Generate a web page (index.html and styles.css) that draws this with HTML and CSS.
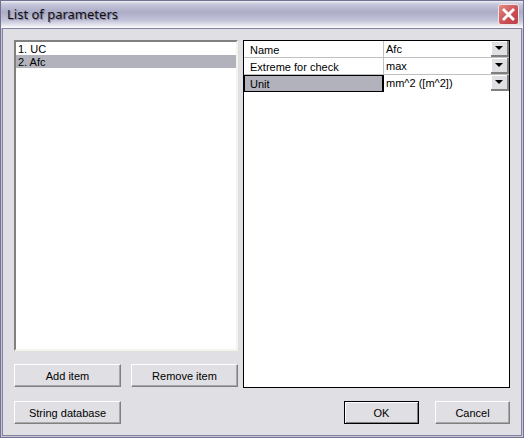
FILE: index.html
```html
<!DOCTYPE html>
<html lang="en">
<head>
    <meta charset="UTF-8">
    <title>List of parameters</title>
    <link rel="stylesheet" href="styles.css">
</head>
<body>
    <div class="window">
        <div class="titlebar">
            <div class="title">List of parameters</div>
            <div class="close">
                <svg width="15" height="15" viewBox="0 0 15 15">
                    <path d="M2 2 L13 13 M13 2 L2 13" stroke="#fff" stroke-width="2.8" fill="none"/>
                </svg>
            </div>
        </div>
        <div class="content">
            <div class="main">
                <div class="left-col">
                    <div class="list">
                        <div class="list-item">1. UC</div>
                        <div class="list-item selected">2. Afc</div>
                    </div>
                    <div class="list-buttons">
                        <button class="btn btn-wide">Add item</button>
                        <button class="btn btn-wide">Remove item</button>
                    </div>
                </div>
                <div class="grid">
                    <div class="row">
                        <div class="cell-label">Name</div>
                        <div class="cell-value">Afc<span class="drop"><span class="arrow"></span></span></div>
                    </div>
                    <div class="row">
                        <div class="cell-label">Extreme for check</div>
                        <div class="cell-value">max<span class="drop"><span class="arrow"></span></span></div>
                    </div>
                    <div class="row">
                        <div class="cell-label active">Unit</div>
                        <div class="cell-value">mm^2 ([m^2])<span class="drop"><span class="arrow"></span></span></div>
                    </div>
                </div>
            </div>
            <div class="footer">
                <button class="btn btn-wide">String database</button>
                <div class="footer-right">
                    <button class="btn btn-small btn-default">OK</button>
                    <button class="btn btn-small">Cancel</button>
                </div>
            </div>
        </div>
    </div>
</body>
</html>
```

FILE: styles.css
```css
* {
    margin: 0;
    padding: 0;
    box-sizing: border-box;
}

html, body {
    width: 524px;
    height: 438px;
    overflow: hidden;
}

body {
    font-family: "Liberation Sans", sans-serif;
    font-size: 11px;
    color: #000;
    background: #e0dfe3;
}

.window {
    height: 438px;
    display: flex;
    flex-direction: column;
    background: #c8c8d8;
    border: 1px solid #72718f;
    padding: 0 1px 1px 1px;
}

.titlebar {
    height: 27px;
    margin: 0 -1px;
    padding: 0 4px 1px 6px;
    display: flex;
    align-items: center;
    justify-content: space-between;
    background: linear-gradient(#f0f0f6 0, #c8c8dc 3px, #abacc6 11px, #c6c6da 20px, #f4f4f8 26px, #fff 27px);
}

.title {
    font-family: "Noto Sans", sans-serif;
    font-size: 13px;
    color: #111;
    text-shadow: 1px 1px 1px #77779a;
}

.close {
    width: 21px;
    height: 21px;
    display: flex;
    align-items: center;
    justify-content: center;
    background: linear-gradient(135deg, #e08a80, #c94f52 60%, #b8404a);
    border: 1px solid #f2e4e4;
    border-radius: 3px;
}

.content {
    flex: 1;
    display: flex;
    flex-direction: column;
    background: #e0dfe3;
    border: 1px solid #82819f;
    padding: 11px 11px 10px 11px;
}

.main {
    display: flex;
    gap: 5px;
    height: 348px;
}

.left-col {
    width: 224px;
    display: flex;
    flex-direction: column;
}

.list {
    height: 311px;
    background: #fff;
    border: 2px solid;
    border-color: #808080 #f5f4ea #f5f4ea #808080;
}

.list-item {
    height: 13px;
    line-height: 15px;
    padding-left: 2px;
}

.list-item.selected {
    background: #b1b2bb;
}

.list-buttons {
    display: flex;
    justify-content: space-between;
    margin-top: 13px;
}

.btn {
    height: 23px;
    font-family: inherit;
    font-size: 11px;
    color: #000;
    background: #e0dfe3;
    border: 1px solid;
    border-color: #fff #808080 #808080 #fff;
    box-shadow: inset -1px -1px 0 #a8a8a8;
}

.btn-wide {
    width: 107px;
}

.btn-small {
    width: 75px;
}

.btn-default {
    border-color: #000;
    box-shadow: inset 1px 1px 0 #fff, inset -1px -1px 0 #808080;
}

.grid {
    width: 267px;
    background: #fff;
    border: 1px solid #000;
}

.row {
    display: flex;
    height: 17px;
    border-bottom: 1px solid #c0c0c0;
}

.row:last-child {
    border-bottom: 0;
}

.cell-label {
    width: 140px;
    padding-left: 6px;
    line-height: 19px;
    border-right: 1px solid #c0c0c0;
}

.cell-label.active {
    background: #b1b2bb;
    border: 1px solid #000;
    border-width: 1px 2px 1px 1px;
    line-height: 17px;
    padding-left: 5px;
}

.cell-value {
    flex: 1;
    position: relative;
    padding-left: 2px;
    line-height: 16px;
}

.drop {
    position: absolute;
    top: 0;
    right: 0;
    width: 18px;
    height: 16px;
    display: flex;
    align-items: center;
    justify-content: center;
    background: #e0dfe3;
    border-right: 2px solid #808080;
    border-bottom: 2px solid #808080;
    box-shadow: inset 1px 1px 0 #fff;
}

.arrow {
    width: 0;
    height: 0;
    border-style: solid;
    border-width: 4px 4px 0 4px;
    border-color: #000 transparent transparent transparent;
}

.footer {
    display: flex;
    justify-content: space-between;
    margin-top: 13px;
}

.footer-right {
    display: flex;
    gap: 16px;
}
```
